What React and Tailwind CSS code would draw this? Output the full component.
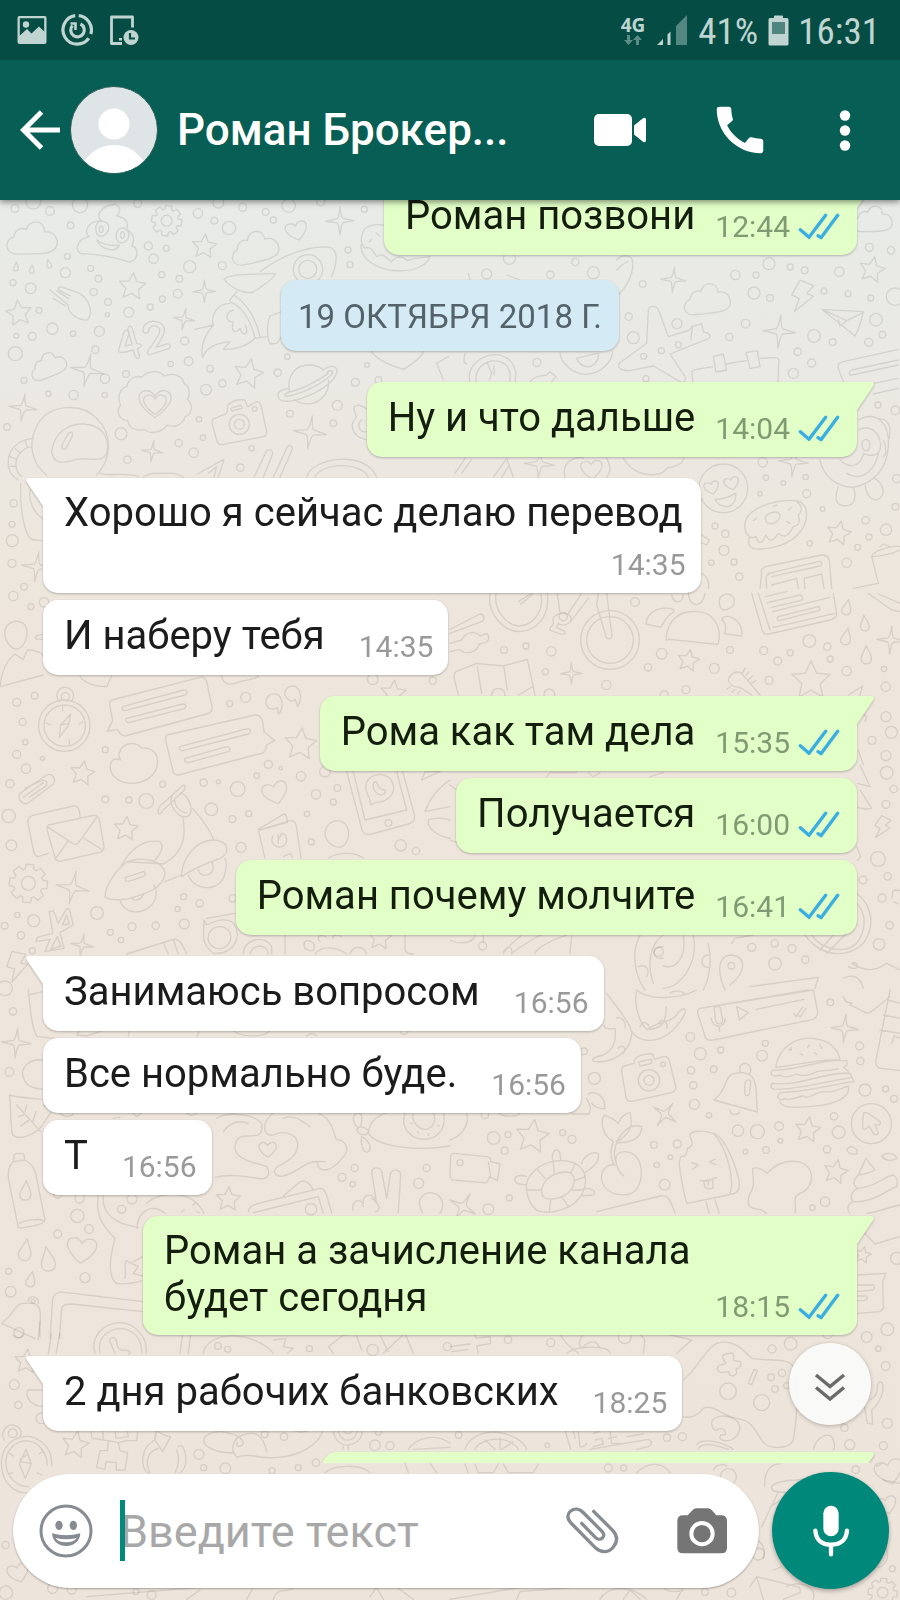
import React from 'react';

const MESSAGES = [
    { id: 1, out: true, text: 'Роман позвони', time: '12:44', first: true },
    { id: 2, date: '19 ОКТЯБРЯ 2018 Г.' },
    { id: 3, out: true, text: 'Ну и что дальше', time: '14:04', first: true },
    { id: 4, text: 'Хорошо я сейчас делаю перевод', time: '14:35', first: true, stacked: true },
    { id: 5, text: 'И наберу тебя', time: '14:35' },
    { id: 6, out: true, text: 'Рома как там дела', time: '15:35', first: true },
    { id: 7, out: true, text: 'Получается', time: '16:00' },
    { id: 8, out: true, text: 'Роман почему молчите', time: '16:41' },
    { id: 9, text: 'Занимаюсь вопросом', time: '16:56', first: true },
    { id: 10, text: 'Все нормально буде.', time: '16:56' },
    { id: 11, text: 'Т', time: '16:56' },
    { id: 12, out: true, text: 'Роман а зачисление канала будет сегодня', time: '18:15', first: true, long: true },
    { id: 13, text: '2 дня рабочих банковских', time: '18:25', first: true },
];

// Unit shapes (radius 1) that the wallpaper repeats
const gearPath = () => {
    const pts = [];
    for (let i = 0; i < 8; i++) {
        const a = (i * Math.PI) / 4;
        [[-0.3, 0.76], [-0.2, 1], [0.2, 1], [0.3, 0.76]].forEach(([d, r]) => {
            pts.push(`${(Math.cos(a + d) * r).toFixed(3)} ${(Math.sin(a + d) * r).toFixed(3)}`);
        });
    }
    return `M${pts.join('L')}ZM.36 0A.36 .36 0 1 1 -.36 0A.36 .36 0 1 1 .36 0Z`;
};

const SHAPES = {
    star: 'M0-1L.28-.38L.95-.31L.46.15L.59.81L0 .48L-.59.81L-.46.15L-.95-.31L-.28-.38Z',
    spark: 'M0-1Q.08-.2 .22-.16L1 0L.22.14Q.1.2 0 1Q-.1.2-.2.16L-1 .04L-.2-.14Q-.08-.2 0-1Z',
    heart: 'M0 .9C-.6.5-1 0-1-.35C-1-.8-.35-1 0-.45C.35-1 1-.8 1-.35C1 0 .6.5 0 .9Z',
    cloud: 'M-.6.6C-1.15.6-1.15 0-.75-.1C-.7-.4-.45-.5-.25-.4C-.1-.85.5-.8.5-.3C.95-.35 1.1.1.95.35C.8.6.3.6-.6.6Z',
    drop: 'M.1-1C.3-.4.6 0 .55.45C.5 1.1-.5 1.1-.55.45C-.6 0-.1-.4.1-1Z',
    gear: gearPath(),
    bolt: 'M-.3-1L.6-.8L.25-.25L.7-.15L-.3 1L-.15.15L-.65 0Z',
};

// Every patch of the wallpaper is drawn at three times its size
const PATCHES = [
    {
        x: 0,
        y: 190,
        dots: [[45,55,12],[100,35,22],[150,63,13],[240,45,23],[413,40,12],[594,70,14],[643,92,10],[687,114,20],[655,38,16],[728,52,12],[797,66,10],[820,90,9],[866,47,20],[962,35,12],[1093,58,9],[212,106,10],[445,168,12],[499,175,9],[461,206,14],[202,199,9],[196,248,15],[272,235,9],[485,254,9],[569,230,18],[667,227,12],[39,278,9],[92,295,16],[295,266,10],[538,266,10],[281,306,11],[324,336,10],[487,327,9],[533,311,13],[451,351,9],[386,367,15],[322,374,6],[117,361,9],[157,416,17],[219,431,8],[298,424,15],[49,437,7],[97,439,12],[46,491,21],[286,479,11],[554,453,12],[566,514,13],[512,522,8],[630,536,10],[833,548,11],[667,580,11],[618,599,16],[378,552,10],[315,566,14],[72,571,9],[145,611,8],[221,615,14],[314,615,8],[1044,180,9],[1050,224,9],[1101,525,7],[1066,577,12],[862,500,8],[1012,646,15],[870,671,10],[1000,700,10],[597,688,8],[363,731,18],[21,711,10],[536,759,11],[609,743,8],[581,788,14],[755,775,8],[382,809,11],[721,833,11],[41,940,11],[36,1003,9],[37,1052,18],[36,1120,12],[72,1190,10],[1135,570,10]],
        marks: [['star',613,170,38,5],['star',397,290,42,5],['star',57,370,40,-8],['star',745,552,46,12],['spark',1020,92,42,0],['spark',613,304,34,0],['spark',552,387,32,10],['spark',262,541,50,12],['spark',69,653,42,8],['spark',930,727,50,8],['spark',457,784,32,8],['spark',110,1130,45,8],['gear',500,92,46,8],['heart',890,122,32,-14],['cloud',97,148,74,0],['cloud',765,175,70,-12],['cloud',145,528,54,-20],['drop',48,230,13,0],['drop',95,238,13,0],['drop',146,222,13,-20]],
        paths: [
            // smiling pile
            'M345 42C300 48 285 80 305 92C262 92 250 128 268 140C225 148 222 192 250 192C300 190 350 205 388 216C415 212 418 175 396 168C408 140 395 125 380 120C388 95 375 82 350 78C365 60 360 50 345 42ZM300 95C285 98 282 128 298 138C318 142 330 120 325 105C320 95 310 93 300 95ZM360 115C345 122 345 150 358 158C375 162 390 145 386 130C380 115 370 112 360 115ZM290 150C310 165 335 168 358 166C345 190 305 180 290 150Z',
            'M303 108a6 10 0 1 0 1 0M367 125a6 10 0 1 0 1 0',
            // fork hand
            'M150 300L205 345C200 365 232 392 262 390C280 370 272 330 235 308L182 290C170 292 175 300 185 305L212 318M160 325L195 347M170 302L206 326',
            // 42
            'M372 425L356 480C355 490 365 490 400 480L406 500C412 508 420 505 418 497L412 476C425 472 430 462 410 460L396 412C390 405 382 412 384 420L396 463L375 468L388 428C388 420 376 418 372 425Z',
            'M430 425C425 405 445 392 465 394C495 398 500 420 485 445L468 472L500 462C512 460 515 470 505 476L450 494C440 494 440 486 446 480L475 435C485 415 475 408 462 407C450 408 445 418 446 424C442 432 434 432 430 425Z',
            // rocket
            'M780 245C840 200 920 165 990 172C1015 180 1012 220 995 260M672 268C690 248 770 255 826 250C828 260 800 280 760 306C730 315 690 290 672 268ZM690 330L710 305M690 340C650 340 630 380 640 405L585 418M705 318C740 340 770 390 780 440M690 335C730 350 755 400 765 445C740 470 700 480 670 478L690 455C650 460 620 470 608 502C600 470 610 440 640 405M700 360C670 370 680 400 700 395C690 430 710 430 720 415C730 445 750 430 735 405M800 440L765 445M845 365L810 378C800 400 800 440 810 462L830 460L858 420',
            'M968 238a44 44 0 1 0-88 0a44 44 0 1 0 88 0ZM950 238a27 27 0 1 0-54 0a27 27 0 1 0 54 0Z',
            // planet
            'M868 605C860 560 885 525 925 525C945 525 960 530 970 540C995 520 1015 530 1010 550C1000 580 950 610 905 625C870 637 830 640 834 612C838 600 850 598 866 596M985 570C990 610 960 640 925 642C905 642 890 635 882 628M866 606C900 600 950 575 985 550M870 606C850 610 850 622 866 618C910 610 970 580 998 550C998 540 990 540 980 548',
            // flower with a heart
            'M380 590C385 565 410 555 425 562C445 540 480 540 492 558C520 545 550 560 552 580C570 590 572 615 562 628C582 645 575 675 555 680C550 705 520 715 502 705C485 728 450 735 435 718C410 725 385 715 384 692C355 690 348 660 362 645C350 620 360 595 380 590Z',
            // camera
            'M645 685L680 670L684 645C700 630 720 628 735 630L742 650L770 635C780 635 784 645 785 655L800 725C800 740 790 740 780 742L665 764C655 764 652 758 650 750L636 700C636 690 640 686 645 685ZM692 655L724 645L727 655L695 663ZM748 703a30 30 0 1 0-60 0a30 30 0 1 0 60 0ZM733 703a15 15 0 1 0-30 0a15 15 0 1 0 30 0ZM771 657a7 7 0 1 0-14 0a7 7 0 1 0 14 0Z',
            // astronaut
            'M140 855C95 820 80 760 115 700C150 645 240 635 290 685C335 730 340 800 290 855M155 785C160 735 200 700 250 702C320 705 330 760 318 795C300 820 270 800 230 808C190 820 160 825 155 785ZM186 765L205 730C215 722 220 730 216 740L198 775C190 782 184 775 186 765ZM100 745C50 750 20 780 25 830C30 850 40 862 55 870M95 770C65 775 45 800 48 830C50 845 58 855 65 860M45 775L60 790M30 800L50 808M25 830L48 828M75 750L82 772M62 880C60 950 70 1020 90 1045C100 1052 115 1050 128 1052M90 900C85 930 100 970 128 985M300 850C340 860 380 845 415 860M430 862C450 845 480 850 500 850C520 848 540 855 550 862',
            // donut under the first bubble
            'M1088 130C1090 110 1120 100 1150 105M1088 130C1080 150 1085 165 1095 175C1110 165 1120 185 1130 200C1145 185 1160 205 1175 215C1190 195 1210 200 1222 212C1250 200 1270 205 1290 200M1082 165C1085 220 1150 245 1210 242C1250 240 1280 225 1288 205M1128 128L1138 138M1115 148L1108 156',
            // small things over the first incoming bubble
            'M592 852L672 808L655 862M625 850L650 830L642 862M762 862L800 782C808 775 820 782 818 792L790 862M820 862L862 770C870 762 880 770 876 780L840 862M920 862C935 800 1100 780 1130 862M945 862C960 820 1080 810 1105 862M1062 650L1075 645C1090 650 1100 655 1103 660M1062 650C1060 670 1072 675 1068 685C1050 700 1050 740 1103 750M1085 690C1070 700 1075 730 1103 725M1115 485C1130 510 1180 530 1210 538C1240 520 1265 500 1270 485M1310 520L1345 500M1310 520L1330 570',
        ],
        hearts: [[465, 640, 48], [465, 642, 34]],
    },
    {
        x: 450,
        y: 190,
        dots: [[178,205,18],[110,252,15],[301,254,11],[376,216,11],[430,248,18],[578,282,10],[536,380,11],[550,443,18],[681,401,15],[838,441,11],[685,464,9],[634,482,9],[581,499,9],[588,566,9],[261,517,12],[856,255,14],[918,255,9],[912,309,18],[960,324,10],[957,221,18],[1021,231,9],[1064,241,10],[1168,245,14],[1258,172,12],[1323,181,11],[1122,303,9],[1194,311,9],[1262,324,9],[1335,320,26],[1278,389,19],[1297,434,10],[1256,457,12],[1148,456,10],[1092,438,19],[887,401,13],[1043,485,11],[1085,519,12],[1030,550,15],[1284,645,9],[1336,661,13],[938,817,14],[948,863,8],[1067,861,8],[1000,879,7],[930,911,7],[1070,911,12],[1118,957,7],[1340,866,12],[1336,950,10],[1247,991,11],[1308,1019,17],[1257,1041,9],[1223,1072,9],[795,1008,9],[826,1031,11],[822,1081,15],[784,1118,8],[852,1116,9],[868,1160,11],[1079,1060,8],[1190,1118,14]],
        marks: [['star',1266,240,40,12],['star',1166,1030,38,12],['spark',670,269,38,5],['spark',988,424,50,5],['spark',268,822,45,5],['spark',1030,815,45,5],['cloud',772,330,68,-5],['cloud',1268,90,58,0],['bolt',1056,320,48,10],['heart',425,838,32,-5],['heart',785,893,22,-14],['heart',845,880,22,-14]],
        paths: [
            // plane
            'M595 360C600 345 620 345 628 365L655 440L720 420L725 410L755 402L760 425L775 430C785 438 780 445 770 448L660 492L705 560C710 575 700 580 690 575L610 528L540 542C515 542 500 535 508 520L590 460ZM722 448L728 410',
            // paper plane
            'M1115 358L1240 365C1235 390 1225 420 1215 438ZM1115 358L1190 392L1240 368M1165 390L1170 408L1190 392',
            // board
            'M728 575L726 550C724 542 730 540 740 538L788 530M828 522L888 512M930 505L975 503C985 503 988 508 986 520L984 575M790 500L820 492L830 540L798 546ZM888 488L922 482L930 530L900 536ZM1345 478L1180 515C1165 518 1162 525 1165 535L1180 575M1345 510L1205 540C1195 545 1195 555 1205 555L1345 525M1270 580L1345 565M1270 612L1345 595',
            // watch, smile, feather
            'M60 575C40 500 180 450 198 550L195 575M78 575C70 505 170 490 180 550V575M112 520L125 550L118 570M132 525L132 555M45 490C40 510 40 520 50 522M330 490C335 520 370 555 410 553C450 550 485 520 488 485M380 505C400 500 430 492 446 490C446 520 425 532 410 530C395 528 385 520 380 505ZM500 210C520 190 545 195 548 215C552 260 520 300 500 320M500 240C520 220 530 215 535 215M240 575C260 550 280 560 290 555L300 545L318 560L305 575',
            // heart-eyed face, penguin
            'M893 895a73 73 0 1 0-146 0a73 73 0 1 0 146 0ZM795 928C815 928 840 920 857 910C860 935 845 952 828 950C812 948 800 940 795 928Z',
            'M1225 690C1280 660 1320 700 1315 770C1310 840 1270 880 1210 892C1160 890 1120 860 1110 810M1225 720C1260 700 1290 730 1292 765C1292 800 1260 800 1240 790M1260 765a12 17 0 1 0-24 0a12 17 0 1 0 24 0ZM1240 795C1225 840 1190 830 1170 810M1285 790C1270 860 1220 870 1190 850M1165 890C1150 930 1160 950 1190 947C1215 945 1220 920 1210 892M1245 885C1250 925 1280 945 1298 915C1305 890 1285 870 1270 862M1280 685C1310 685 1325 700 1318 745M1300 800C1310 795 1310 770 1300 750',
            // donut
            'M885 1000C890 950 1000 920 1050 935C1075 950 1075 990 1055 1020C1020 1070 950 1080 910 1076C890 1065 895 1050 900 1040M885 1000C880 1030 900 1050 918 1040C925 1070 940 1055 948 1035C960 1065 975 1045 985 1030C1005 1050 1020 1030 1030 1010C1050 1005 1050 990 1045 975C1060 960 1055 945 1040 935M945 985C950 965 985 960 990 975C990 1000 950 1015 945 985ZM920 985L910 992M970 950L980 945M1015 960L1025 952M1010 995L1020 1000',
            // newspaper, cup
            'M930 1195L935 1150C930 1135 945 1130 955 1128L1115 1095C1130 1095 1135 1100 1138 1110L1145 1195M950 1195L948 1165C948 1155 960 1150 970 1148M955 1150L1105 1115C1115 1112 1120 1125 1110 1128L965 1160M965 1185L1040 1165L1045 1195M1065 1195L1062 1165L1115 1152L1122 1195M1265 1100C1270 1080 1330 1065 1350 1070M1265 1100C1290 1100 1330 1090 1350 1080M1265 1100L1285 1180L1210 1195M1290 1070L1300 1062L1320 1070',
            // cat and ice under the outgoing bubble
            'M15 850L45 805M35 850L65 808M130 862L170 805L190 862M155 862L175 830M345 862C330 800 400 800 400 805M470 805C485 830 480 850 470 862M520 805C560 870 640 860 650 835C680 830 700 820 700 805M748 1030L778 1050L770 1065L748 1055M748 1150C765 1150 780 1170 775 1195M170 255L210 270M55 250L60 270',
        ],
    },
    {
        x: 0,
        y: 590,
        dots: [[40,18,14],[93,50,9],[132,37,14],[50,337,12],[104,317,10],[68,396,11],[76,457,8],[50,493,12],[78,536,14],[127,505,6],[30,581,12],[26,678,20],[34,766,16],[316,479,9],[316,628,10],[387,630,9],[439,633,22],[488,583,9],[611,578,11],[655,575,6],[713,597,22],[634,658,19],[697,687,10],[746,671,9],[723,772,15],[689,341,9],[737,322,15],[805,523,12],[842,535,5],[770,557,8],[903,559,14],[975,545,16],[948,613,14],[1012,594,10],[1000,636,9],[921,672,8],[934,756,9],[1118,268,16],[1298,272,11],[1202,766,17],[1248,783,11],[1165,699,10],[291,969,19],[101,992,18],[52,975,8],[14,1007,10],[63,1036,11],[331,1027,9],[396,1010,12],[467,1007,11],[363,1050,8],[553,1002,15],[599,940,11],[551,920,9],[533,957,8],[97,1082,9],[698,925,11]],
        marks: [['star',247,550,38,10],['star',378,717,38,5],['star',902,463,50,5],['star',1180,310,40,5],['star',1140,1045,36,5],['spark',218,893,50,12],['spark',246,1065,34,10],['gear',85,880,58,5],['heart',826,608,38,-16],['bolt',50,1130,46,0]],
        paths: [
            // compass
            'M270 407a77 77 0 1 0-154 0a77 77 0 1 0 154 0ZM256 407a62 62 0 1 0-124 0a62 62 0 1 0 124 0ZM178 335C160 310 180 290 197 292C218 295 228 315 214 335M208 320a12 12 0 1 0-24 0a12 12 0 1 0 24 0ZM212 372L206 405L178 442L182 405ZM212 372L182 405L206 400M188 348V362M208 450V462M140 400L152 404M238 402L248 396',
            // speech cards
            'M335 330L600 262C615 260 618 268 620 275L636 350C638 365 632 370 620 372L375 438C360 438 358 425 352 418L322 424L338 392L330 350C328 338 330 332 335 330ZM368 350L550 300C562 298 565 310 555 315L375 362C365 362 364 352 368 350ZM380 385L548 342C560 342 560 352 552 356L385 398C378 396 376 388 380 385Z',
            'M500 435L765 375C780 374 785 385 788 395L792 425L824 452L800 465C798 480 795 488 785 490L535 555C522 556 520 548 518 540L498 455C496 445 497 438 500 435ZM540 470L745 415C755 418 752 428 745 432L548 482C538 482 536 472 540 470ZM555 505L680 470C692 470 692 482 685 485L565 518C555 518 550 508 555 505Z',
            // quotes, bubble cloud, clip
            'M836 372C850 355 850 330 835 315C815 305 795 320 798 340C802 358 820 362 832 352C835 360 833 368 836 372ZM893 350C905 330 905 305 890 292C870 280 852 298 855 315C860 330 875 338 886 328C890 335 888 342 893 350Z',
            'M360 485C370 455 410 455 425 475C455 470 475 490 472 520C470 560 430 580 395 580C350 580 325 550 332 520C338 505 350 505 362 510C355 500 356 490 360 485ZM60 610L140 555C155 548 170 565 160 582L85 638C70 648 50 628 60 610ZM70 622L130 578M75 595L125 572C138 568 145 578 138 588L88 622',
            // envelope
            'M145 790L115 800C105 800 102 790 100 780L84 700C82 685 88 680 98 676L220 648C235 646 238 655 240 680M145 705L280 676C292 675 296 682 298 690L312 770C312 782 305 786 298 787L180 814C170 814 166 808 164 800L142 722C140 712 142 708 145 705ZM145 712L220 762C230 766 235 760 240 752L290 682M165 808L205 752M308 780L252 745',
            // scooter
            'M475 670C470 655 480 645 495 635L550 585C560 588 555 600 545 608L490 660C482 672 478 672 475 670ZM515 620C505 650 540 690 565 678C585 660 565 615 540 608M525 625C520 650 545 668 560 668M578 655C600 680 625 710 642 750M548 680C560 740 550 790 490 822L380 815M365 825C390 780 430 745 480 755C495 770 480 795 465 810M315 920C315 890 350 830 390 812C430 800 490 812 495 850C490 900 420 915 390 925C360 932 325 930 315 920ZM378 862L430 845C440 848 436 858 428 860L385 875C375 875 372 866 378 862ZM545 850C550 800 590 750 640 750C690 752 690 790 660 805C620 820 570 840 545 860ZM495 875L545 855M360 930C370 975 440 980 465 930C472 910 468 895 462 885M395 925C405 935 425 930 432 910M565 855C580 900 650 910 672 860C680 835 680 815 675 805M595 838C600 865 640 860 640 832L636 815',
            // passport, phone
            'M775 718L852 672C862 675 862 690 862 697L780 720M775 718L795 805M780 720L870 692C885 690 888 700 890 715L903 805M818 738C805 770 850 785 860 755C862 740 855 732 845 730L838 745M835 735V760M850 800L870 790L878 802',
            'M1040 545L1085 715C1090 735 1100 735 1115 732L1225 702C1245 695 1246 685 1242 670L1208 545M1060 545L1095 690L1220 660L1190 545M1112 645L1108 622C1085 590 1100 555 1140 553C1180 555 1195 600 1165 625C1150 635 1135 638 1128 636ZM1120 590C1118 575 1128 570 1132 580C1135 595 1145 600 1155 600C1160 610 1145 618 1135 612C1125 606 1120 598 1120 590ZM1275 665C1290 620 1320 590 1350 570M1275 665L1350 650M1265 570L1275 545L1320 545ZM1285 690C1280 720 1320 740 1350 745M1285 690C1310 680 1330 685 1350 690M975 735C975 700 1005 680 1035 700C1055 725 1045 765 1020 772C1000 772 978 755 975 735ZM985 805C1010 785 1070 785 1090 805',
            // balloons, eagle
            'M14 130C14 100 45 85 70 100C90 120 80 170 50 178C28 175 14 150 14 130ZM0 290C5 240 20 210 45 192L70 208L82 180C110 180 130 190 130 200M0 290L130 255M128 133C110 135 100 140 110 148H128M240 258C250 280 290 290 320 290L335 258M665 258C670 290 700 285 720 275C750 270 770 265 775 258',
            // bluetooth
            'M148 965L160 962L175 1000L200 955L208 958L220 1005L180 1028L192 1075L135 1085L150 1048L108 1055L112 1042L158 1030L148 965ZM188 1005L200 975L208 1002ZM152 1078L172 1040L182 1068Z',
            // goggles, ticket
            'M620 985L705 970M612 990C612 1030 600 1060 640 1090C700 1095 730 1040 700 1000C680 980 650 990 620 1005ZM625 1040C630 1010 660 1000 685 1020C705 1050 680 1080 650 1075C630 1068 622 1055 625 1040ZM730 1090C730 1050 790 1030 815 1070V1092M750 1092C760 1060 800 1060 805 1092M380 1092L520 1048C540 1045 545 1060 560 1092M490 1058L505 1092M520 1050L535 1092M855 1035V1092M915 1075C905 1050 925 1045 940 1060C950 1080 935 1090 915 1075ZM960 1055C945 1040 965 1030 978 1042M1000 1045C990 1035 1020 1030 1022 1040M945 1092C965 1065 1010 1070 1040 1092M1215 1035V1080C1218 1090 1230 1092 1240 1092M1050 1092C1060 1065 1090 1065 1100 1092',
        ],
    },
    {
        x: 450,
        y: 590,
        dots: [[555,36,13],[162,180,10],[228,168,9],[304,184,14],[286,245,9],[469,285,14],[635,191,16],[594,232,11],[793,235,15],[840,180,10],[708,299,12],[957,271,12],[941,182,12],[983,213,12],[1021,188,9],[1078,153,19],[1132,170,11],[1141,207,9],[1190,243,14],[1302,237,8],[1307,290,14],[1308,380,15],[1324,427,18],[1266,451,12],[1308,497,15],[1310,548,19],[1331,597,11],[1308,643,12],[1284,807,22],[1313,859,11],[1239,870,12],[1296,924,12],[1319,1006,11],[1287,1063,17],[975,1121,19],[905,1072,12],[974,1060,11],[1026,1076,12],[1066,1109,11],[340,80,12],[98,1068,12],[626,1085,14],[844,1127,10],[298,313,16],[145,315,20]],
        marks: [['star',715,212,34,10],['star',1083,272,60,0],['spark',364,250,32,0],['spark',1322,150,42,5],['drop',1190,52,24,8],['drop',1243,100,24,-10],['drop',1188,140,26,8],['drop',1248,195,28,-5],['bolt',1296,712,34,15]],
        paths: [
            // bicycle
            'M120 10C110 70 160 125 210 125C260 122 300 80 292 10M138 10C130 60 170 108 210 108C250 105 285 60 272 10M205 35L245 10M212 42L250 12M568 150a88 88 0 1 0-176 0a88 88 0 1 0 176 0ZM550 150a70 70 0 1 0-140 0a70 70 0 1 0 140 0ZM440 45L468 140C472 150 485 148 486 138L470 10M440 45L445 10M395 10L355 70M415 25L362 95M322 10L330 70M310 100C300 70 350 60 362 80C368 105 335 110 325 100L320 112L345 125C345 138 335 135 300 120C298 105 310 110 310 100Z',
            // wrench
            'M0 118L90 72C105 75 105 90 95 95L0 130M0 160L35 150C50 120 80 125 90 138L110 130C122 142 115 155 105 158L88 162C80 190 45 195 30 178L0 185',
            // people
            'M648 150C650 90 690 60 740 65C790 65 815 110 806 155C806 165 800 163 790 162L660 148ZM588 102C590 70 620 50 660 55C675 58 675 65 665 70C645 85 640 100 632 112ZM822 80C850 75 880 100 875 138L825 132C830 110 825 95 815 88ZM808 35C808 10 840 5 852 25C858 50 835 60 820 60C810 55 808 45 808 35ZM715 10C720 60 760 50 765 10M665 15C670 40 695 45 700 15',
            // newspaper
            'M905 10L935 115C938 130 945 135 958 132L1140 90C1160 85 1162 75 1158 60L1150 10M925 10L960 120M945 20L1010 5M952 38L1050 15C1060 18 1060 28 1052 32L965 52M985 80L1105 50C1112 52 1112 60 1105 62L988 92C980 92 980 82 985 80ZM968 65L1140 22M970 112L1155 70M1255 10L1325 60L1350 65M1285 12L1350 40',
            // map, toothbrush
            'M18 245L80 220L160 228L232 208L255 315M18 245C8 250 12 260 14 270L25 315M82 230L95 310M162 232L172 300M205 315L248 290M835 270C840 250 860 240 875 250L930 315M835 270C838 290 860 290 875 295L905 315M840 290L830 298M855 298L846 306M870 302L862 312M885 235L878 248M897 245L888 256M908 258L896 268M917 272L904 280M630 315C635 300 650 295 655 315M1195 315L1238 288L1230 315M1245 395L1250 380L1235 370',
            // wheel, lightning, leaves on the right edge
            'M1220 910C1270 950 1275 1010 1240 1060C1200 1100 1120 1110 1065 1035M1220 940C1250 970 1250 1020 1220 1060C1190 1090 1120 1085 1085 1035M1110 1080L1150 1035M1130 1090L1220 1000M1230 525L1260 590L1222 580M1230 600L1265 655C1245 660 1230 655 1220 652M1225 480L1240 525M1195 1130C1230 1150 1230 1110 1205 1120C1240 1140 1270 1150 1310 1120L1350 1140M1325 925C1330 910 1325 900 1335 900L1350 902M1330 935L1345 942M825 1200C790 1120 820 1095 845 1095C885 1100 895 1140 840 1185M900 1190L1105 1162L1095 1195M1180 1165C1210 1150 1230 1160 1240 1195M1220 770L1232 800L1222 812',
            // dragon
            'M570 1037C545 1080 550 1150 585 1200M640 1035C600 1060 590 1120 610 1180M640 1070C600 1070 605 1110 640 1105M700 1037C710 1100 680 1140 640 1128M730 1037C745 1110 700 1190 640 1195M775 1060C785 1110 780 1160 760 1200M775 1095C750 1095 750 1135 775 1132M565 1130C590 1120 600 1140 590 1160M0 1050C30 1065 70 1060 75 1035M160 1090C180 1060 200 1050 215 1035M185 1090C240 1050 280 1030 275 1035M255 1090C270 1060 340 1040 350 1035M100 1035V1055M365 1035L360 1090M160 1090C165 1070 190 1065 185 1090M845 1060L855 1045L910 1035M0 585L20 600M0 750L25 760M290 560L300 548H380M415 548L430 560L450 548M600 560L640 548',
        ],
    },
    {
        x: 0,
        y: 990,
        dots: [[15,-5,22],[39,64,11],[28,246,13],[239,625,14],[232,678,20],[173,732,12],[267,717,13],[396,627,15],[365,658,12],[255,863,15],[26,844,9],[32,905,16],[1064,534,11],[1026,562,12],[1058,583,8],[1280,534,11],[1256,580,15],[933,658,17],[173,614,11],[57,1028,15],[99,934,6]],
        marks: [['spark',49,158,44,5],['star',685,628,38,3],['heart',245,780,44,5],['heart',803,478,26,0],['drop',75,780,34,5],['drop',142,808,38,-12],['drop',92,868,24,8],['drop',76,602,30,0]],
        paths: [
            // leaf
            'M28 315C60 325 110 325 130 328M28 315C35 350 28 390 38 435C60 455 110 430 128 405M50 345L122 425M75 365L80 345M98 395L108 365M70 375L55 380M85 392L62 408',
            // note, cloud
            'M85 0C90 50 95 120 112 140L165 145M128 5L85 15M128 210C90 205 65 230 68 255C75 290 100 295 128 298M130 345L155 365L130 400M240 120L230 135L260 138L300 125M385 138L388 122M590 138L600 122M700 122C720 140 790 145 810 122M920 138C930 128 945 130 950 138M1200 122C1205 138 1220 138 1225 122',
            // bottle
            'M40 515L42 495C50 488 65 490 72 493L74 510C95 520 105 540 108 555L135 690C135 705 70 715 55 713L26 570C22 545 28 525 40 515ZM40 515L72 510M58 700C75 690 120 685 130 692',
            // heart made of hands
            'M650 385C680 365 760 370 785 400C790 440 770 438 735 438C700 440 700 480 715 495C740 520 780 520 800 530C815 555 800 568 780 566C740 560 690 550 645 562M670 425C690 395 720 390 745 400M820 370C780 400 790 440 820 435C850 420 890 430 893 460C895 500 860 515 832 530C815 545 825 562 850 558C890 550 920 510 955 515M850 385C880 370 910 395 930 410M955 370C990 380 1000 420 1008 448C1040 450 1050 480 1030 500C1000 540 970 550 955 530C945 510 960 515 975 515',
            // candy, donut hat
            'M1060 390C1060 360 1090 360 1085 390C1085 420 1070 420 1060 390ZM1070 420C1075 405 1100 410 1105 425C1100 440 1075 435 1070 420ZM1085 440C1080 470 1095 500 1110 480C1115 460 1095 445 1085 440ZM1105 430C1110 390 1130 380 1160 368M1105 430C1130 470 1250 485 1350 468M1215 370C1200 410 1230 450 1280 448C1320 440 1340 410 1330 370M1240 370C1230 395 1260 420 1280 418C1300 412 1310 390 1300 370M1252 425l4 5M1285 432v5M1312 405l5 3M1232 400h4M180 370C195 385 215 380 220 370M340 385L360 382M400 370L410 380L425 368M560 370C570 380 585 375 590 368',
            // unicorn, cards, victory hand
            'M295 612C285 680 310 710 345 745C330 800 320 860 350 880C380 885 400 880 425 872M310 615C305 660 330 700 415 712M440 640C480 600 580 600 612 670M412 715C410 670 450 635 495 670M375 865C380 840 370 825 378 812L415 830L400 850L428 858M428 800L400 815M760 668L955 620L970 670M745 665C745 650 760 645 775 640L960 595C975 595 978 605 995 670M850 618L900 575C920 570 930 580 940 600M1060 660C1050 630 1090 620 1090 650M1090 640C1085 615 1120 600 1130 640L1115 545C1120 530 1140 530 1145 545L1160 625L1172 548C1180 535 1200 540 1202 552L1195 668M1115 625C1140 640 1145 665 1125 665M1258 640C1260 600 1320 595 1328 640C1328 655 1325 665 1320 670M1258 640C1260 655 1262 660 1268 668M545 665l8-6M578 645l10-6M590 665l8 3',
            // bell, screen
            'M5 1000C60 960 30 935 100 940C135 945 115 1010 120 1040M5 1000L105 1046M85 935C80 915 118 915 115 940M150 1046L158 925C165 905 185 905 200 908L428 935M178 1046L185 955C190 942 200 942 215 942L428 965',
        ],
    },
    {
        x: 450,
        y: 990,
        dots: [[721,141,13],[751,191,18],[812,180,9],[723,241,11],[791,238,10],[730,286,11],[733,343,15],[777,376,8],[936,197,16],[946,160,9],[1141,37,10],[1229,168,12],[1231,213,11],[1245,300,18],[1307,297,9],[1332,326,10],[1152,379,11],[1166,427,19],[987,409,13],[991,452,7],[922,425,21],[864,422,17],[886,485,7],[948,480,10],[1131,478,11],[1125,635,14],[1087,653,8],[612,465,10],[682,462,12],[661,502,7],[620,525,8],[644,584,16],[131,444,19],[174,434,9],[164,482,11],[338,428,9],[366,448,12],[178,624,9],[115,658,16],[105,375,11],[402,184,10],[1340,805,18],[30,518,9]],
        marks: [['spark',1184,115,42,5],['spark',645,373,40,35],['star',1073,420,40,8],['star',1157,546,38,12],['star',247,440,52,8],['star',1238,795,26,12],['spark',38,650,44,30]],
        paths: [
            // voice message
            'M750 55L1075 0M1090 0L1103 65C1103 78 1098 84 1090 88L790 150C775 153 768 150 765 138L743 70C742 60 745 56 750 55ZM793 60C790 45 812 45 812 60L818 90C818 105 800 105 797 92ZM784 85C788 118 825 115 826 85M808 112V124M860 50L895 68L868 90ZM918 58L1062 28M1030 70L1038 80L1058 52M1045 78L1052 80L1068 55',
            // camera
            'M522 228L552 220L556 205C570 192 595 190 608 192L614 208L640 200C650 198 655 202 658 212L677 290C678 302 672 306 665 308L545 334C535 335 530 330 528 322L515 245C514 235 516 230 522 228ZM568 215L604 208C608 212 606 220 602 221L572 228C566 226 566 218 568 215ZM629 271a32 32 0 1 0-64 0a32 32 0 1 0 64 0ZM612 271a15 15 0 1 0-30 0a15 15 0 1 0 30 0ZM646 223a7 7 0 1 0-14 0a7 7 0 1 0 14 0Z',
            // bell
            'M792 330C845 290 810 245 880 248C930 255 915 310 922 366ZM872 248C862 228 880 215 892 222C905 230 905 245 898 252M840 360C840 378 865 375 868 366M885 280C890 265 905 268 902 280L898 312C890 322 882 315 884 305Z',
            // burger
            'M978 225C990 170 1040 140 1090 145C1140 150 1165 180 1170 210C1110 205 1030 228 978 232ZM968 240C1040 245 1110 205 1190 212C1195 225 1190 228 1180 232C1190 240 1200 245 1195 252M968 240C955 255 970 262 990 255C1000 265 1020 260 1040 252C1060 262 1080 255 1100 245C1130 240 1150 242 1165 235M968 280C1050 290 1120 245 1200 250L1212 275C1160 280 1080 305 990 308C975 325 990 335 1005 325C1020 335 1040 320 1060 318C1080 330 1095 305 1120 305C1150 310 1170 295 1195 288M968 280C958 290 962 296 975 298C1030 300 1130 275 1205 262M990 335C995 360 1060 352 1120 345C1180 335 1200 310 1195 290',
            'M1018 180l6-8v8zM1050 190l8 5M1078 165l-6 8M1110 165l6 10M1092 188l8 5',
            // cursor badge
            'M1324 401a60 60 0 1 0-120 0a60 60 0 1 0 120 0ZM1238 395L1240 372C1245 362 1252 368 1290 395C1295 405 1285 405 1275 405L1285 428C1280 438 1272 435 1270 430L1258 408L1245 418C1236 418 1238 410 1238 395Z',
            // plant
            'M490 455C450 430 455 390 462 375C480 380 500 395 505 400C510 385 525 370 540 367C550 400 545 430 500 455M500 455C520 420 545 400 575 410C575 440 550 460 500 458M490 455C480 480 480 500 490 520M500 458C492 480 492 495 495 510M495 525C470 520 450 545 455 570C462 610 510 620 540 612C570 600 580 560 570 520C555 480 510 475 498 500C495 530 510 550 522 558',
            // turtle
            'M230 605C220 560 270 510 340 512C400 515 420 560 398 610C370 660 300 675 262 662C245 650 235 630 230 605ZM275 600C280 560 330 540 360 548C380 560 375 590 355 608C325 630 270 640 275 600ZM395 520C400 500 430 480 445 492C450 510 430 535 405 548M310 515C300 490 320 465 330 490L332 510M230 560C200 550 185 565 200 580L228 585M400 595C430 595 440 605 430 615L392 618M262 538L285 565M310 515L312 550M375 522L362 550M405 560L375 572M402 600L368 600M355 650L335 620M298 665L302 628M232 600L272 600',
            // ice cream
            'M720 440C715 420 760 420 790 430C830 440 870 560 868 590C865 610 850 612 835 615L712 640C705 635 700 600 690 540C685 520 690 500 695 500C710 500 712 485 712 475C728 470 730 460 720 440ZM790 430C830 470 855 570 840 612M725 518L745 525L728 538M795 508L778 515L798 525M750 572C770 575 785 570 800 562M762 575L764 590C770 600 788 598 790 590L788 568M775 572V585M768 635L778 670M795 630L808 670',
            // video, ghost, cake
            'M10 490L110 500C122 502 122 508 122 515L150 522L142 572L118 560C115 575 110 580 100 578L8 570C0 568 0 560 0 550L2 500C4 492 5 490 10 490ZM115 515L122 560',
            'M1035 670C1040 640 1025 620 1050 610C1100 590 1095 520 1040 515C1000 508 970 530 950 550C930 530 905 530 908 540C910 570 915 590 900 610C885 650 900 655 935 660L950 670M1190 480C1200 460 1225 475 1222 490C1210 495 1195 492 1190 480ZM1295 498C1310 485 1335 490 1340 505C1325 515 1305 512 1295 498ZM1225 555L1248 505L1275 540C1260 550 1240 552 1225 555ZM1225 555C1205 575 1210 590 1225 595C1280 590 1300 560 1330 555M1225 595C1200 605 1200 625 1210 635C1270 640 1310 600 1340 590C1345 575 1340 560 1330 555M1210 635C1190 645 1190 660 1200 670M1250 670C1290 665 1320 650 1350 645M1240 725L1275 762L1350 740M1222 855L1308 850L1298 875L1300 955L1290 965L1222 970M1222 885H1270C1275 890 1272 898 1268 900L1222 905M1222 918H1248C1256 925 1250 932 1240 932H1222M440 665L630 618C650 612 660 625 675 670',
            // dinosaur, bottle on the right
            'M560 0C550 50 570 100 590 118C640 120 650 90 648 50M560 0C600 35 690 25 740 0M470 10C490 40 520 70 540 110C550 160 640 180 700 80C715 55 700 45 680 75C660 100 620 95 600 115M545 130C540 200 470 220 432 214C420 205 440 200 460 195C490 180 500 150 495 115C470 120 462 112 462 105M500 85C510 75 530 95 525 112M505 175C520 160 530 175 520 190M570 110C580 85 600 105 598 115M625 100C640 80 655 100 650 115M660 10C670 0 700 0 705 15M1320 0L1278 210C1275 230 1285 235 1300 236L1350 242M1312 30L1350 40M1300 75L1350 85M1290 120L1350 130M1325 160L1332 138L1350 145M1180 20C1190 50 1215 30 1200 45C1240 60 1250 80 1270 60L1320 20M415 265a18 18 0 1 0 36 0a18 18 0 1 0-36 0M410 325C420 345 425 355 418 370M415 312C440 300 465 320 465 355C450 358 430 350 425 340M365 372H418M50 370C60 410 30 440 0 450M145 365C150 380 200 385 208 370',
        ],
    },
    {
        x: 0,
        y: 1320,
        dots: [[43,194,15],[55,255,11],[124,295,16],[17,675,11],[654,78,10],[683,88,9],[928,86,9],[794,343,10],[852,350,11],[597,403,15],[611,443,9],[676,445,16],[948,428,11],[816,452,9],[895,443,9],[1135,337,9],[1125,376,16],[1170,377,12],[1342,80,12],[1118,90,17],[38,340,13],[18,818,20],[158,805,15],[215,808,14],[408,815,9],[455,825,13]],
        marks: [['star',80,125,38,5],['star',226,375,42,10],['heart',55,758,32,-15]],
        paths: [
            'M155 40L145 100M180 40L168 100M115 58L120 5M40 45C45 58 65 55 68 45M438 100C445 50 400 5 355 8C310 12 270 50 285 100M425 98C428 55 395 25 360 25C320 28 290 60 300 98M330 65C325 50 345 48 350 65C350 85 365 95 378 90C390 90 395 100 385 102M330 65L345 100M540 100L548 40M565 100L572 40M610 100C620 30 760 30 820 100M820 60L858 55L850 80L880 85L862 100M985 80L1030 45L1060 42M985 80L1000 100M1068 42L1085 90M1140 45L1165 95M1150 100L1215 40L1240 100M128 210H85C75 215 80 255 128 260',
            // compass
            'M155 435C158 370 100 345 72 350C30 355 0 390 5 440C8 490 45 520 80 518M142 435C140 390 110 362 75 362C35 368 15 400 18 435C22 475 55 502 85 500M12 360C0 335 20 312 40 315C65 320 70 345 55 355M78 388L94 432L76 475L58 432ZM60 425L92 430M60 418L85 402M28 400L40 408M118 402L126 396M25 462L38 458M112 458L125 465',
            // pixel monster, refresh
            'M272 328L276 355L310 360L308 330M310 360L325 362L322 392H300L290 442L315 448L318 425L350 428L348 450H375L383 398L360 392L355 368L380 362H410L414 330M325 362L355 368M345 330L348 355L385 350L380 330M470 330C465 350 460 355 465 360C420 380 420 450 445 458M465 360L488 395L512 350C495 348 480 340 470 330ZM475 385C440 395 435 430 450 458M535 380C545 370 555 385 557 410C560 440 550 450 540 458M530 390C540 415 535 440 525 458',
            // dreaming cloud, lollipop, wheel
            'M700 398C650 400 605 380 612 355C625 335 660 330 690 340C730 350 740 375 720 378C710 380 708 372 712 368M712 412C690 395 695 355 730 345C770 330 790 350 800 395M712 412C750 395 780 420 830 412C900 410 960 370 970 328M875 330C900 340 920 335 930 328M1000 328C1000 355 1020 378 1045 375C1080 370 1090 345 1085 328M1015 328C1015 350 1030 362 1045 360C1065 358 1072 342 1070 328M1030 328C1035 345 1055 345 1058 328M1030 378L1028 388M1045 378V388M1225 388C1250 350 1310 340 1350 370M1240 388L1350 382M975 458C1000 435 1080 430 1110 458M1215 430L1225 458M1290 430L1310 458',
            'M260 830L600 802M600 810L560 838M740 838L760 802M820 838C830 800 860 820 880 805M1110 830L1130 802L1150 838M1190 802L1240 838',
        ],
    },
    {
        x: 450,
        y: 1320,
        dots: [[174,59,11],[302,68,12],[524,52,19],[26,345,10],[292,376,7],[651,353,11],[697,350,12],[966,87,12],[1022,71,19],[1133,42,14],[1250,51,16],[1312,28,19],[1285,86,8],[1307,138,13],[1312,310,15],[1183,323,11],[1199,374,15],[1300,377,12],[1217,449,11],[475,444,12],[521,444,9],[834,214,25],[935,248,24],[963,172,10],[996,159,11],[975,207,10],[1010,197,9],[925,702,18],[765,816,10],[844,818,13],[1327,746,9],[835,470,24]],
        marks: [['gear',1298,818,44,5],['heart',1318,455,42,-15],['heart',1310,555,30,-15]],
        paths: [
            // gamepad
            'M700 180C740 150 770 80 800 70C850 55 880 90 905 115C950 125 1010 110 1030 140C1050 200 1040 300 1030 360C1020 390 950 390 935 360C910 320 900 300 860 295C820 290 790 250 760 265C740 290 720 295 700 290M820 105L845 98C855 100 848 115 852 122L870 125C876 135 870 145 858 146L860 160C850 172 838 170 836 155L815 158C800 155 798 140 810 135L828 130C820 120 815 110 820 105ZM895 190L912 148L922 152L905 194Z',
            // pacifier, bowl
            'M785 310C780 285 850 275 868 315C875 340 850 365 825 362C800 358 810 340 825 345C830 330 815 320 800 330C790 332 786 320 785 310ZM740 375C750 355 810 360 850 388M745 385C760 365 800 375 835 388M1090 388C1100 350 1140 330 1150 360C1155 375 1155 385 1150 388M1240 240L1252 310L1268 312L1265 270C1290 250 1305 210 1297 190C1290 180 1280 190 1282 205C1282 225 1270 235 1260 240',
            // orange slice, calendar
            'M45 388C60 340 120 330 160 340C200 350 225 370 230 388M75 388C95 350 180 345 205 388M150 352V388M105 360L135 388M190 365L155 388M45 432L55 458M75 432L85 458H130L145 432M160 432L175 458H250L265 432M345 330L362 388M370 332L375 355M385 335L390 380C395 382 410 375 410 370M430 340L450 335M435 360L455 355L460 372L430 380M475 355L500 350M480 332L485 370H510M420 388L595 358C610 365 605 375 595 380L560 388M530 350L580 342',
            'M0 42L70 40L80 55L120 50L122 70L80 78L85 100M0 80L60 72M5 95L55 88M330 42C350 80 370 85 385 100M400 42C380 70 390 90 400 80C420 60 440 60 450 85M350 100C380 75 480 75 480 100M570 42L585 60L580 100M650 42L725 60L680 100',
            // slippers by the mic button
            'M945 500C940 460 960 430 990 432M965 500C970 490 1000 480 1040 480L1075 475M965 500C960 520 1000 515 1020 518M985 515L935 620M960 560L1010 530M920 660C935 665 950 690 940 715M900 800L920 770L1040 800C1050 800 1052 810 1050 818L1000 838M920 770L940 838M1090 838C1100 800 1050 780 1010 800M1300 480L1350 490M1295 430L1280 440M1270 650C1300 660 1320 690 1310 720C1300 740 1285 745 1280 740M0 838L210 802M200 838L210 815L370 802M450 838C470 800 540 790 590 838M520 838L540 810L570 838M680 838L700 802M640 802C650 815 670 818 700 812M970 750L995 740',
            'M560 458C600 420 640 430 660 458M790 450C800 430 830 430 830 440',
        ],
    },
];

const Wallpaper = () => (
    <svg
        className="absolute inset-0 h-full w-full"
        viewBox="0 200 900 1400"
        preserveAspectRatio="xMidYMin slice"
        fill="none"
        stroke="#3a3530"
        strokeOpacity="0.12"
        strokeLinecap="round"
        strokeLinejoin="round"
        aria-hidden="true"
    >
        {PATCHES.map((p) => (
            <g key={`${p.x}-${p.y}`} transform={`translate(${p.x} ${p.y}) scale(${1 / 3})`} strokeWidth="4">
                {p.dots.map(([x, y, r], i) => <circle key={i} cx={x} cy={y} r={r} />)}
                {p.marks.map(([shape, x, y, s, a], i) => (
                    <path key={i} d={SHAPES[shape]} transform={`translate(${x} ${y}) rotate(${a}) scale(${s})`} strokeWidth={4 / s} />
                ))}
                {(p.hearts || []).map(([x, y, s], i) => (
                    <path key={i} d={SHAPES.heart} transform={`translate(${x} ${y}) scale(${s})`} strokeWidth={4 / s} />
                ))}
                {p.paths.map((d, i) => <path key={i} d={d} />)}
            </g>
        ))}
    </svg>
);

const Ticks = () => (
    <svg className="h-[27px] w-[42px]" viewBox="1044 672 126 81" fill="none" stroke="#3aaee0" strokeWidth="10" strokeLinecap="round" strokeLinejoin="round" aria-label="Прочитано">
        <path d="M1051 722L1077 745L1127 679M1104 740L1113 746L1163 679" />
    </svg>
);

const Tail = ({ out }) => (
    out ? (
        <svg className="absolute -right-[17px] top-0 h-7 w-[18px]" viewBox="0 0 18 28" aria-hidden="true">
            <path d="M0 0H15.500C18 0 18.500 2 17 4.500L1 28H0Z" fill="#e1ffc7" />
        </svg>
    ) : (
        <svg className="absolute -left-[17px] top-0 h-7 w-[18px]" viewBox="0 0 18 28" aria-hidden="true">
            <path d="M18 0H2.500C0 0 -.5 2 1 4.500L17 28H18Z" fill="#ffffff" />
        </svg>
    )
);

const Bubble = ({ msg }) => {
    const corner = msg.first ? (msg.out ? 'rounded-tr-none' : 'rounded-tl-none') : '';
    const gap = msg.first ? 'mt-[21px]' : 'mt-[7px]';
    const side = msg.out ? 'self-end bg-[#e1ffc7] pr-[17px]' : 'self-start bg-white pr-[15px]';
    const flow = msg.stacked ? 'flex-col' : 'items-end';
    const textGap = msg.stacked ? 'pb-[11px] pr-[3px]' : msg.out ? 'pr-[20px]' : 'pb-[5px] pr-[34px]';
    const bottom = msg.out && (msg.long ? 'pb-[3px]' : 'pb-[5px]');

    return (
        <li className={`relative flex max-w-[714px] shrink-0 rounded-[15px] pb-[11px] pl-[21px] drop-shadow-[0_1px_1px_rgba(0,0,0,0.25)] ${msg.stacked || msg.long ? 'pt-[11px]' : 'pt-3'} ${gap} ${side} ${flow} ${corner}`}>
            {msg.first && <Tail out={msg.out} />}
            <p className={`text-[40px] leading-[47px] ${textGap} ${bottom || ''} ${msg.out ? 'text-[#141d0e]' : 'text-[#1c1c1c]'}`}>{msg.text}</p>
            <div className="flex shrink-0 items-center gap-2 self-end">
                <time className={`text-[30px] leading-[35px] ${msg.out ? 'text-[#829a73]' : 'text-[#999999]'}`}>{msg.time}</time>
                {msg.out && <Ticks />}
            </div>
        </li>
    );
};

const StatusBar = () => (
    <div className="flex h-[60px] items-center bg-[#054d44] pl-[17px] pr-5 text-[#c0d5d1]">
        <div className="flex items-center gap-[14px]">
            <svg className="h-[30px] w-[30px]" viewBox="0 0 30 30" fill="currentColor" aria-hidden="true">
                <path fillRule="evenodd" d="M2.500 1H27.500A2 2 0 0 1 29.500 3V27A2 2 0 0 1 27.500 29H2.500A2 2 0 0 1 .5 27V3A2 2 0 0 1 2.500 1ZM2.800 3.200V20.500L10 14L14.500 18.500L22 11.500L27.200 16.500V3.200Z" />
                <circle cx="9" cy="9.500" r="3.200" />
            </svg>
            <svg className="h-8 w-8" viewBox="0 0 32 32" fill="none" stroke="currentColor" strokeWidth="3.200" aria-hidden="true">
                <path d="M14.200 1.700A14.300 14.300 0 1 0 27.800 24.300M17.800 1.700A14.300 14.300 0 0 1 29.800 20" />
                <path d="M19.500 10A6.800 6.800 0 1 1 11.500 11.500" />
                <path d="M9.500 9.500H14.500V16" strokeWidth="2.600" />
            </svg>
            <svg className="ml-[3px] h-[31px] w-[29px]" viewBox="0 0 29 31" fill="none" aria-hidden="true">
                <path d="M22.500 12.500V2H1.500V28.500H12" stroke="currentColor" strokeWidth="2.800" strokeLinejoin="round" />
                <rect x="9" y="23" width="3" height="2.500" fill="currentColor" />
                <circle cx="21" cy="22.500" r="7.500" fill="currentColor" />
                <path d="M20 18V23.500H25" stroke="#054d44" strokeWidth="2.200" />
            </svg>
        </div>
        <div className="ml-auto flex items-center">
            <div className="flex flex-col items-center">
                <span className="font-['Open_Sans',sans-serif] text-[19px] font-bold leading-[18px]">4G</span>
                <svg className="mt-[1px] h-[10px] w-[18px] text-[#5c8c85]" viewBox="0 0 18 10" fill="currentColor" aria-hidden="true">
                    <path d="M3 0H6V5H9L4.500 10L0 5H3ZM12 10H15V5H18L13.500 0L9 5H12Z" />
                </svg>
            </div>
            <svg className="ml-[11px] h-[31px] w-[31px]" viewBox="0 0 31 31" fill="currentColor" aria-hidden="true">
                <path d="M1 30L7 24V30ZM11.500 19.500L14.500 16.500V30H11.500Z" />
                <path d="M20 11L31 0V30H20Z" fill="#538781" />
            </svg>
            <span className="ml-[11px] pt-[3px] font-['Roboto_Condensed','Liberation_Sans_Narrow',Roboto,sans-serif] text-[37px] leading-[44px]">41%</span>
            <svg className="ml-[10px] h-[31px] w-[21px]" viewBox="0 0 21 31" aria-hidden="true">
                <path d="M6 3V1.500Q6 .5 7 .5H14Q15 .5 15 1.500V3H19Q20.500 3 20.500 4.500V29Q20.500 30.500 19 30.500H2Q.5 30.500 .5 29V4.500Q.5 3 2 3Z" fill="currentColor" />
                <rect x="4" y="7" width="13" height="12" fill="#4f857e" />
            </svg>
            <time className="ml-[9px] pt-[3px] font-['Roboto_Condensed','Liberation_Sans_Narrow',Roboto,sans-serif] text-[37px] leading-[44px]">16:31</time>
        </div>
    </div>
);

const ChatHeader = () => (
    <div className="flex h-[140px] items-center bg-[#075e54] pl-5 pr-[37px] text-white">
        <button type="button" aria-label="Назад" className="flex shrink-0 items-center">
            <svg className="h-10 w-10" viewBox="0 0 40 40" fill="none" stroke="currentColor" strokeWidth="5" aria-hidden="true">
                <path d="M40 20H4M21.500 2L3.500 20L21.500 38" />
            </svg>
        </button>
        <svg className="ml-[10px] h-[88px] w-[88px] shrink-0" viewBox="0 0 88 88" role="img" aria-label="Фото профиля">
            <clipPath id="face"><circle cx="44" cy="44" r="43" /></clipPath>
            <circle cx="44" cy="44" r="43.500" fill="#dfe5e7" stroke="#2c5f59" />
            <g fill="#ffffff" clipPath="url(#face)">
                <circle cx="44" cy="38" r="15.500" />
                <path d="M14 76C22 64 32 59 44 59S66 64 74 76V90H14Z" />
            </g>
        </svg>
        <h1 className="ml-[19px] min-w-0 flex-1 truncate text-[44px] font-medium leading-[52px]">Роман Брокер...</h1>
        <div className="flex shrink-0 items-center">
            <button type="button" aria-label="Видеозвонок">
                <svg className="h-8 w-[53px]" viewBox="0 0 53 32" fill="currentColor" aria-hidden="true">
                    <rect width="38" height="32" rx="5" />
                    <path d="M40 11.500L49 4.200Q52 2.500 52 6V26Q52 29.500 49 27.800L40 20.500Z" />
                </svg>
            </button>
            <button type="button" aria-label="Позвонить" className="ml-[62px]">
                <svg className="h-[62px] w-[62px]" viewBox="0 0 24 24" fill="currentColor" aria-hidden="true">
                    <path d="M20.010 15.380c-1.230 0-2.420-.2-3.530-.56a.977.977 0 0 0-1.010.24l-1.570 1.970c-2.830-1.350-5.480-3.900-6.890-6.830l1.950-1.660c.27-.28.35-.67.24-1.020-.37-1.110-.56-2.300-.56-3.530 0-.54-.45-.99-.99-.99H4.190C3.650 3 3 3.240 3 3.990 3 13.280 10.730 21 20.010 21c.71 0 .99-.63.99-1.180v-3.450c0-.54-.45-.99-.99-.99z" />
                </svg>
            </button>
            <button type="button" aria-label="Ещё" className="ml-14">
                <svg className="h-[41px] w-9" viewBox="0 0 36 41" fill="currentColor" aria-hidden="true">
                    <circle cx="18" cy="5.500" r="5.200" />
                    <circle cx="18" cy="20.500" r="5.200" />
                    <circle cx="18" cy="35.500" r="5.200" />
                </svg>
            </button>
        </div>
    </div>
);

const MessageBar = () => (
    <form className="relative flex shrink-0 items-center gap-[13px] pb-[11px] pl-[13px] pr-[11px] pt-[9px]" onSubmit={(e) => e.preventDefault()}>
        <div className="flex h-[114px] min-w-0 flex-1 items-center rounded-full bg-white pl-[26px] pr-8 shadow-[0_1px_2px_rgba(0,0,0,0.3)]">
            <button type="button" aria-label="Смайлики" className="shrink-0">
                <svg className="h-[54px] w-[54px]" viewBox="116 552 162 162" aria-hidden="true">
                    <circle cx="197" cy="633" r="75" fill="none" stroke="#868c91" strokeWidth="9" />
                    <ellipse cx="176" cy="616" rx="11" ry="14" fill="#868c91" />
                    <ellipse cx="219" cy="616" rx="11" ry="14" fill="#868c91" />
                    <path d="M155 640Q197 652 240 640C238 691 157 691 155 640Z" fill="#868c91" />
                    <path d="M166 654Q197 662 229 654Q221 667 197 667T166 654Z" fill="#ffffff" />
                </svg>
            </button>
            <div className="relative ml-[27px] min-w-0 flex-1">
                <span className="absolute left-0 top-0 h-[61px] w-[5px] bg-[#008a7c]" />
                <input
                    type="text"
                    aria-label="Сообщение"
                    placeholder="Введите текст"
                    className="block h-[61px] w-full bg-transparent pt-[2px] text-[45px] leading-[59px] text-[#1c1c1c] outline-none placeholder:text-[#a8a8a8]"
                />
            </div>
            <button type="button" aria-label="Прикрепить" className="shrink-0">
                <svg className="h-[49px] w-[54px]" viewBox="343 559 162 147" fill="none" stroke="#868c91" strokeWidth="10" strokeLinecap="round" strokeLinejoin="round" aria-hidden="true">
                    <path d="M429 575L486 632C504 652 498 670 488 682C474 700 452 700 436 686L361 610C346 595 352 580 360 574C372 565 386 567 396 577L454 635C462 644 460 651 455 655C450 660 441 660 434 653L393 611" />
                </svg>
            </button>
            <button type="button" aria-label="Камера" className="ml-[58px] shrink-0">
                <svg className="h-[46px] w-[50px]" viewBox="680 563 150 138" aria-hidden="true">
                    <path d="M698 585H712L727 569Q731 564 738 564H773Q780 564 784 569L798 585H813Q830 585 830 602V682Q830 699 813 699H698Q681 699 681 682V602Q681 585 698 585Z" fill="#757575" />
                    <circle cx="755" cy="640" r="32" fill="none" stroke="#ffffff" strokeWidth="12" />
                </svg>
            </button>
        </div>
        <button type="button" aria-label="Голосовое сообщение" className="flex h-[117px] w-[117px] shrink-0 items-center justify-center rounded-full bg-[#00897b] shadow-[0_2px_4px_rgba(0,0,0,0.3)]">
            <svg className="h-[52px] w-[38px]" viewBox="1085 554 114 156" aria-hidden="true">
                <rect x="1119" y="556" width="46" height="92" rx="23" fill="#ffffff" />
                <path d="M1095 631C1097 660 1116 673 1142 673S1188 660 1190 631M1142 673V702" fill="none" stroke="#ffffff" strokeWidth="13" strokeLinecap="round" />
            </svg>
        </button>
    </form>
);

const App = () => (
    <div className="flex h-screen flex-col overflow-hidden font-[Roboto,'Noto_Sans',sans-serif]">
        <header className="relative z-10 shrink-0 shadow-[0_2px_6px_rgba(0,0,0,0.45)]">
            <StatusBar />
            <ChatHeader />
        </header>

        <main className="relative flex min-h-0 flex-1 flex-col bg-linear-to-b from-[#e8ebe8] via-[#eee6dc] via-30% to-[#ede4db]">
            <Wallpaper />

            <div className="relative min-h-0 flex-1 overflow-hidden">
                {/* the list is scrolled part of the way through the first message */}
                <ul className="-mt-[41px] flex flex-col px-[43px]">
                    {MESSAGES.map((msg) => (
                        msg.date ? (
                            <li key={msg.id} className="mb-[10px] mt-[25px] self-center rounded-[15px] bg-[#d4eaf4] px-[17px] pb-[15px] pt-[17px] text-[33px] leading-[39px] text-[#54626a] drop-shadow-[0_1px_1px_rgba(0,0,0,0.25)]">
                                {msg.date}
                            </li>
                        ) : (
                            <Bubble key={msg.id} msg={msg} />
                        )
                    ))}
                    <li className="relative mt-[21px] h-[75px] w-[535px] self-end rounded-[15px] rounded-tr-none bg-[#e1ffc7] drop-shadow-[0_1px_1px_rgba(0,0,0,0.25)]">
                        <Tail out />
                    </li>
                </ul>

                <button type="button" aria-label="Вниз" className="absolute bottom-[38px] right-[29px] flex h-[82px] w-[82px] items-center justify-center rounded-full bg-[#fafafa]/95 shadow-[0_1px_4px_rgba(0,0,0,0.25)]">
                    <svg className="mt-[5px] h-[30px] w-[32px]" viewBox="0 0 32 30" fill="none" stroke="#6b6b6b" strokeWidth="3.500" aria-hidden="true">
                        <path d="M2 3L16 14.500L30 3M2 15.500L16 27L30 15.500" />
                    </svg>
                </button>
            </div>

            <MessageBar />
        </main>
    </div>
);

export default App;
